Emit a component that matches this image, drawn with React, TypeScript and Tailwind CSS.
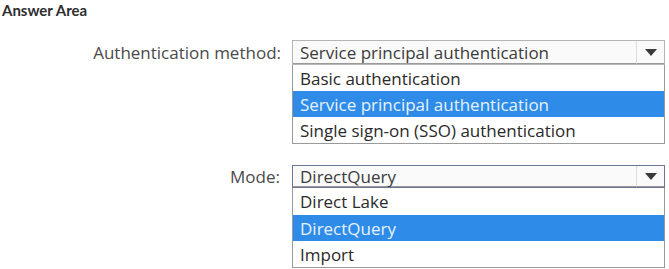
import React from "react";

function Arrow() {
  return (
    <svg width="12" height="7" viewBox="0 0 12 7">
      <path d="M0 0 L12 0 L6 7 Z" fill="#3a3a3a" />
    </svg>
  );
}

function Dropdown({
  value,
  options,
  selected,
  selectH,
  rowHs,
  focus,
}: {
  value: string;
  options: string[];
  selected: number;
  selectH: number;
  rowHs: number[];
  focus?: boolean;
}) {
  return (
    <div className="w-[373px] flex flex-col">
      <div
        className={`flex border ${focus ? "border-[#6b7590]" : "border-[#b5b5b5]"} bg-[#fafafa]`}
        style={{ height: selectH }}
      >
        <div className="flex-1 flex items-center pl-[7px] text-[#3c3c3c] border-b border-[#9a9a9a]">{value}</div>
        <div className="w-[28px] flex items-center justify-center border-l border-[#dcdcdc] border-b border-b-[#9a9a9a]">
          <Arrow />
        </div>
      </div>
      <div className="border-x border-b border-[#9a9a9a] bg-white">
        {options.map((o, i) => (
          <div
            key={o}
            style={{ height: rowHs[i] }}
            className={`flex items-center pl-[7px] ${
              i === selected ? "bg-[#2f8be8] text-[#e6f3ff]" : "text-[#2a2a2a]"
            }`}
          >
            {o}
          </div>
        ))}
      </div>
    </div>
  );
}

export default function App() {
  return (
    <div
      className="w-[669px] h-[269px] bg-white overflow-hidden text-[17px] leading-none"
      style={{ fontFamily: '"Open Sans", "Noto Sans", sans-serif' }}
    >
      <div
        className="h-[40px] pl-[2px] pt-[3px] text-[15px] font-bold text-[#2e2e2e]"
        style={{ fontFamily: 'Lato, "Open Sans", sans-serif' }}
      >
        Answer Area
      </div>
      <div className="flex">
        <div className="w-[282px] h-[25px] flex items-center justify-end pr-[1px] text-[#4a4a4a]">
          Authentication method:
        </div>
        <div className="ml-[10px]">
          <Dropdown
            value="Service principal authentication"
            options={["Basic authentication", "Service principal authentication", "Single sign-on (SSO) authentication"]}
            selected={1}
            selectH={25}
            rowHs={[26, 26, 26]}
          />
        </div>
      </div>
      <div className="flex mt-[21px]">
        <div className="w-[282px] h-[23px] flex items-center justify-end pr-[2px] text-[#4a4a4a]">Mode:</div>
        <div className="ml-[10px]">
          <Dropdown
            value="DirectQuery"
            options={["Direct Lake", "DirectQuery", "Import"]}
            selected={1}
            selectH={23}
            rowHs={[27, 26, 26]}
            focus
          />
        </div>
      </div>
    </div>
  );
}
